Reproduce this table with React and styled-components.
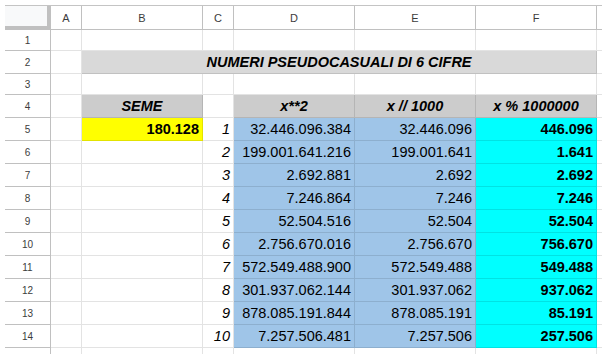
import React from "react";
import styled, { createGlobalStyle } from "styled-components";

const GlobalStyle = createGlobalStyle`
  html, body { margin: 0; padding: 0; background: #fff; overflow: hidden; }
  body { font-family: "Liberation Sans", Arial, sans-serif; }
  * { box-sizing: border-box; }
`;

const Sheet = styled.div`
  display: grid;
  grid-template-columns: 46px 31px 121px 31px 121px 121px 121px 120px;
  grid-template-rows: 24px 21px 23px 21px 23px repeat(11, 23px);
  margin: 5px 0 0 5px;
  border-top: 1px solid #c4c4c4;
  width: 597px;
  height: 349px;
  overflow: hidden;
`;

const Corner = styled.div`
  background: #f8f9fa;
  border-right: 4px solid #c0c0c0;
  border-bottom: 4px solid #c0c0c0;
`;

const ColumnHeader = styled.div`
  display: flex;
  align-items: center;
  justify-content: center;
  background: #fff;
  border-right: 1px solid #c0c0c0;
  border-bottom: 1px solid #c0c0c0;
  font-size: 11px;
  color: #3c3c3c;
`;

const RowHeader = styled.div`
  display: flex;
  align-items: center;
  justify-content: center;
  background: #fff;
  border-right: 1px solid #c0c0c0;
  border-bottom: 1px solid #c0c0c0;
  font-size: 10px;
  color: #3c3c3c;
`;

const justify = { left: "flex-start", center: "center", right: "flex-end" };

const Cell = styled.div`
  display: flex;
  align-items: flex-end;
  justify-content: ${(p) => justify[p.$align || "left"]};
  grid-column: ${(p) => (p.$span ? `span ${p.$span}` : "auto")};
  padding: 0 3px 3px;
  background: ${(p) => p.$bg || "#fff"};
  border-right: 1px solid rgba(0, 0, 0, 0.11);
  border-bottom: 1px solid rgba(0, 0, 0, 0.11);
  font-size: 14.5px;
  line-height: 16px;
  color: #000;
  font-weight: ${(p) => (p.$bold ? 700 : 400)};
  font-style: ${(p) => (p.$italic ? "italic" : "normal")};
  white-space: nowrap;
  overflow: hidden;
`;

const GREY_TITLE = "#d9d9d9";
const GREY_HEAD = "#cccccc";
const YELLOW = "#ffff00";
const BLUE = "#9fc5e8";
const CYAN = "#00ffff";

const squares = [
  "32.446.096.384",
  "199.001.641.216",
  "2.692.881",
  "7.246.864",
  "52.504.516",
  "2.756.670.016",
  "572.549.488.900",
  "301.937.062.144",
  "878.085.191.844",
  "7.257.506.481",
];
const divs = [
  "32.446.096",
  "199.001.641",
  "2.692",
  "7.246",
  "52.504",
  "2.756.670",
  "572.549.488",
  "301.937.062",
  "878.085.191",
  "7.257.506",
];
const mods = [
  "446.096",
  "1.641",
  "2.692",
  "7.246",
  "52.504",
  "756.670",
  "549.488",
  "937.062",
  "85.191",
  "257.506",
];

const columns = ["A", "B", "C", "D", "E", "F", ""];

function EmptyRow({ n }) {
  return (
    <>
      <RowHeader>{n}</RowHeader>
      {columns.map((c, i) => (
        <Cell key={i} />
      ))}
    </>
  );
}

export default function App() {
  return (
    <>
      <GlobalStyle />
      <Sheet>
        <Corner />
        {columns.map((c, i) => (
          <ColumnHeader key={i}>{c}</ColumnHeader>
        ))}

        <EmptyRow n={1} />

        <RowHeader>2</RowHeader>
        <Cell />
        <Cell $span={5} $bg={GREY_TITLE} $align="center" $bold $italic>
          NUMERI PSEUDOCASUALI DI 6 CIFRE
        </Cell>
        <Cell />

        <EmptyRow n={3} />

        <RowHeader>4</RowHeader>
        <Cell />
        <Cell $bg={GREY_HEAD} $align="center" $bold $italic>SEME</Cell>
        <Cell />
        <Cell $bg={GREY_HEAD} $align="center" $bold $italic>x**2</Cell>
        <Cell $bg={GREY_HEAD} $align="center" $bold $italic>x // 1000</Cell>
        <Cell $bg={GREY_HEAD} $align="center" $bold $italic>x % 1000000</Cell>
        <Cell />

        {squares.map((sq, i) => (
          <React.Fragment key={i}>
            <RowHeader>{i + 5}</RowHeader>
            <Cell />
            {i === 0 ? (
              <Cell $bg={YELLOW} $align="right" $bold>180.128</Cell>
            ) : (
              <Cell />
            )}
            <Cell $align="right" $italic>{i + 1}</Cell>
            <Cell $bg={BLUE} $align="right">{sq}</Cell>
            <Cell $bg={BLUE} $align="right">{divs[i]}</Cell>
            <Cell $bg={CYAN} $align="right" $bold>{mods[i]}</Cell>
            <Cell />
          </React.Fragment>
        ))}

        <EmptyRow n={15} />
      </Sheet>
    </>
  );
}
